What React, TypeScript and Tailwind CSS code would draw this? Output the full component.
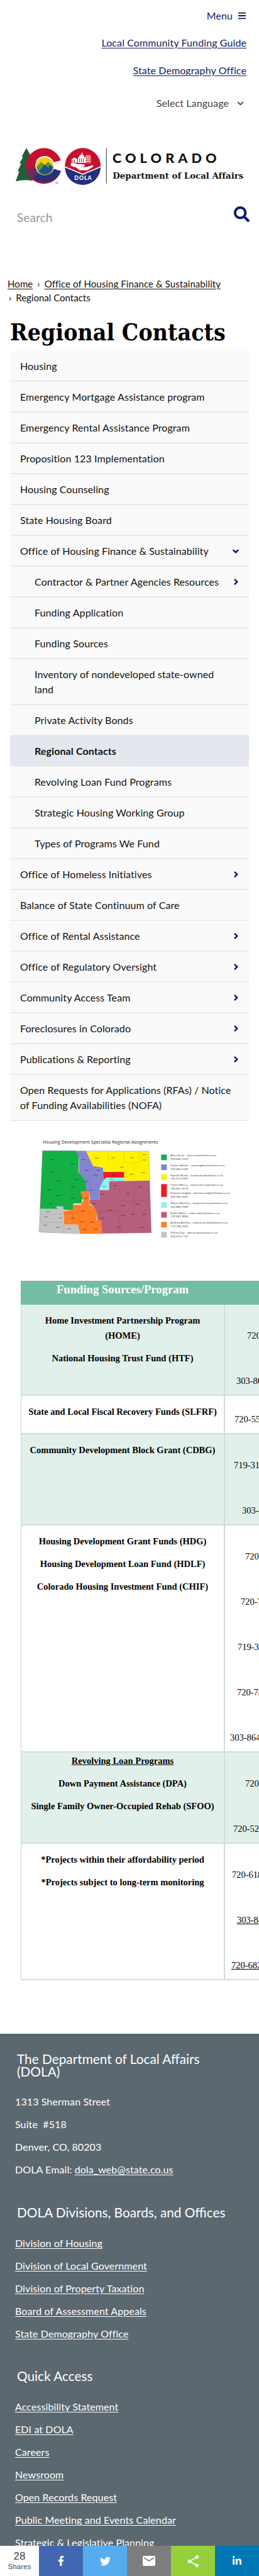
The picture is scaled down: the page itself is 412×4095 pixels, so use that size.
import React from "react";
import { ChevronDown } from "lucide-react";
import { FaBars, FaSearch, FaFacebookF, FaTwitter, FaLinkedinIn } from "react-icons/fa";
import { MdEmail, MdShare } from "react-icons/md";

type NavEntry = { label: string; sub?: boolean; arrow?: "right" | "down"; active?: boolean };

const nav: NavEntry[] = [
  { label: "Housing" },
  { label: "Emergency Mortgage Assistance program" },
  { label: "Emergency Rental Assistance Program" },
  { label: "Proposition 123 Implementation" },
  { label: "Housing Counseling" },
  { label: "State Housing Board" },
  { label: "Office of Housing Finance & Sustainability", arrow: "down" },
  { label: "Contractor & Partner Agencies Resources", sub: true, arrow: "right" },
  { label: "Funding Application", sub: true },
  { label: "Funding Sources", sub: true },
  { label: "Inventory of nondeveloped state-owned land", sub: true },
  { label: "Private Activity Bonds", sub: true },
  { label: "Regional Contacts", sub: true, active: true },
  { label: "Revolving Loan Fund Programs", sub: true },
  { label: "Strategic Housing Working Group", sub: true },
  { label: "Types of Programs We Fund", sub: true },
  { label: "Office of Homeless Initiatives", arrow: "right" },
  { label: "Balance of State Continuum of Care" },
  { label: "Office of Rental Assistance", arrow: "right" },
  { label: "Office of Regulatory Oversight", arrow: "right" },
  { label: "Community Access Team", arrow: "right" },
  { label: "Foreclosures in Colorado", arrow: "right" },
  { label: "Publications & Reporting", arrow: "right" },
  { label: "Open Requests for Applications (RFAs) / Notice of Funding Availabilities (NOFA)" },
];

function Arrow({ dir }: { dir: "right" | "down" }) {
  return (
    <svg
      viewBox="0 0 12 12"
      className={dir === "down" ? "mt-[6px] h-3 w-3 shrink-0 rotate-90" : "mt-[6px] h-3 w-3 shrink-0"}
      fill="none"
      stroke="#0b0b66"
      strokeWidth="2.4"
    >
      <path d="M4 1.8 L8.2 6 L4 10.2" />
    </svg>
  );
}

function NavRow({ entry }: { entry: NavEntry }) {
  return (
    <li
      className={`flex justify-between border-b-2 border-[#ebebeb] pt-3 pr-[15px] pb-[11px] ${entry.sub ? "pl-[39px]" : "pl-4"} ${
        entry.active ? "bg-[#e5e7ef] font-bold" : "bg-[#fafafa]"
      }`}
    >
      <span className={entry.sub ? "max-w-[310px]" : "max-w-[345px]"}>{entry.label}</span>
      {entry.arrow && <Arrow dir={entry.arrow} />}
    </li>
  );
}

function Logo() {
  return (
    <svg viewBox="0 690 1236 201" className="block h-[67px] w-[412px]">
      <path
        d="M126 706 L103 748 L110 748 L93 780 L101 780 L84 818 L92 817 L75 865 Q115 855 152 862 L175 850 L175 770 L150 748 Z"
        fill="#245d38"
      />
      <path d="M290 765 A85 85 0 1 0 290 818 L256 806 A46 46 0 1 1 256 774 Z" fill="#c8102e" />
      <path d="M131 802 L145 838 A85 85 0 0 0 291 815 L256 805 A46 46 0 0 1 180 822 L162 802 Z" fill="#2b2f75" />
      <path d="M133 806 L155 795 L182 828 L152 852 A85 85 0 0 1 133 806 Z" fill="#6a2c63" />
      <circle cx="214" cy="790" r="45" fill="#fff" />
      <circle cx="214" cy="790" r="40" fill="#ffcd00" />
      <path d="M174 795 L197 772 L214 788 L230 770 L254 795 A40 40 0 0 1 174 795 Z" fill="#5d9732" />
      <path d="M186 818 L213 784 L230 800 L240 786 L253 800 A40 40 0 0 1 186 818 Z" fill="#1d4f91" />
      <text x="262" y="875" fontSize="11" fontFamily="Liberation Sans" fill="#333">TM</text>
      <circle cx="395" cy="791" r="85" fill="#c8102e" />
      <path d="M310 797 L395 832 L480 797 A85 85 0 0 1 310 797 Z" fill="#232f7c" />
      <path d="M310 796 L395 831 L480 796" fill="none" stroke="#fff" strokeWidth="5" />
      <path
        d="M336 779 Q352 776 366 782 L402 784 Q410 790 400 794 L378 795 L410 797 L440 788 Q449 789 445 794 L418 812 L380 812 L362 798 L340 792 Z"
        fill="#fff"
      />
      <path d="M342 776 V760 Q356 744 369 760 V776 Z" fill="#fff" />
      <path d="M372 777 V751 H376 Q379 739 389 737 V728 H394 V737 Q402 740 404 751 H408 V777 Z" fill="#fff" />
      <path d="M380 755 V774 M389 755 V774 M398 755 V774 M348 764 V775 M356 762 V775" stroke="#c8102e" strokeWidth="3" />
      <path d="M410 742 H431 V779 M410 742 V779 M417 742 V779 M424 742 V779 M410 751 H431 M410 760 H431 M410 769 H431" fill="none" stroke="#fff" strokeWidth="2.5" />
      <text x="355" y="858" fontSize="26" fontWeight="900" fontFamily="Lato" fill="#fff" textLength="82">DOLA</text>
      <path d="M508 706 V875" stroke="#333" strokeWidth="3" />
      <text x="537" y="778" fontSize="65" fontWeight="900" fontFamily="Lato, sans-serif" fill="#111" textLength="497">COLORADO</text>
      <text x="538" y="851" fontSize="41" fontWeight="700" fontFamily="'DejaVu Serif Condensed','DejaVu Serif', serif" fill="#111" textLength="624" lengthAdjust="spacingAndGlyphs">
        Department of Local Affairs
      </text>
    </svg>
  );
}

const legend: [string, string, string, number, number][] = [
  ["#14b045", "Alicia Scott – alicia.scott@state.co.us", "970-640-7070", 175, 1032],
  ["#8585cf", "Pamm Gibson – pamm.gibson@state.co.us", "720-682-5245", 222, 1072],
  ["#fff200", "Natalie Wowk – natalie.wowk@state.co.us", "720-610-5937", 269, 1064],
  ["", "Teresa McCoy – teresa.mccoy@state.co.us", "720-661-9719", 316, 1064],
  ["", "Demetra English – demetra.english@state.co.us", "303-902-2602", 355, 1096],
  ["#8cf5f0", "Wayne McClary – wayne.mcclary@state.co.us", "303-866-7069", 402, 1086],
  ["#b55f7c", "Robin Miller – robin.miller@state.co.us", "720-682-9694", 449, 1048],
  ["#ff7f27", "Andrew Atchley – andrew.atchley@state.co.us", "719-298-2059", 496, 1086],
  ["#c4c4c4", "Denny Day – denny.day@state.co.us", "303-619-1137", 544, 1038],
];

const counties: [number, number][] = [
  [250, 191], [347, 210], [250, 250], [280, 291], [347, 321], [366, 286], [234, 335], [277, 362], [347, 375], [241, 400],
  [229, 438], [219, 464], [216, 503], [277, 513], [330, 520], [290, 468], [395, 436], [347, 470], [392, 487], [437, 488],
  [404, 523], [457, 522], [400, 191], [413, 242], [470, 242], [457, 264], [415, 294], [435, 336], [462, 183], [540, 182],
  [630, 181], [688, 166], [688, 192], [582, 226], [627, 260], [683, 253], [543, 264], [533, 285], [498, 318], [550, 314],
  [671, 320], [612, 352], [587, 410], [657, 402], [526, 431], [587, 457], [635, 450], [688, 451], [568, 513], [677, 513],
  [453, 400], [490, 470], [486, 355], [409, 375],
];

function RegionMap() {
  return (
    <svg viewBox="0 6 1236 720" className="block h-[240px] w-[412px]" fontFamily="'Open Sans', sans-serif">
      <text x="205" y="114" fontSize="21" fill="#222" textLength="549">Housing Development Specialist Regional Assignments</text>
      <path d="M203 148 H362 L377 175 L374 250 L400 275 L411 300 V343 H383 L400 355 L388 400 H350 L348 430 H303 L298 415 H264 L280 425 H191 Z" fill="#14b045" />
      <path d="M362 149 H411 L445 220 L492 228 L496 285 L475 335 V380 H430 L425 345 H411 V300 L400 275 L376 253 L378 180 Z" fill="#8585cf" />
      <path d="M411 150 H710 L714 290 H592 V249 H492 V224 L445 222 Z" fill="#fff200" />
      <path d="M492 249 H592 V276 H507 L497 288 Z" fill="#ed1c24" />
      <path d="M507 276 H592 V293 H521 V334 H473 L487 300 Z" fill="#8cf5f0" />
      <path d="M521 293 L714 290 L722 539 L487 542 L481 482 L464 480 V450 L448 415 L428 400 V380 H475 V335 H521 Z" fill="#b55f7c" />
      <path d="M383 343 H425 L428 405 L448 415 L464 450 L460 480 H481 L487 543 H383 L370 500 H306 L303 435 L348 428 V405 H385 L398 385 Z" fill="#ff7f27" />
      <path d="M191 425 H280 L264 413 H302 L306 500 H370 L383 543 L187 536 Z" fill="#c4c4c4" />
      <path
        d="M592 152 V205 H665 V152 M665 180 H711 M516 152 V222 M640 205 V289 M567 295 V365 M640 292 V480 M480 435 H570 V540 M570 385 H720 M191 450 H300 M191 490 H300 M300 500 V535 M347 440 V500 M411 480 V540"
        stroke="#00000022"
        strokeWidth="2"
        fill="none"
      />
      <path d="M203 148 L710 150 L722 539 L380 544 L187 536 Z" fill="none" stroke="#777" strokeOpacity="0.6" strokeWidth="2" />
      {counties.map(([x, y]) => (
        <path key={`${x}-${y}`} d={`M${x - 9} ${y} h18`} stroke="#000" strokeOpacity="0.45" strokeWidth="3" />
      ))}
      <rect x="769" y="307" width="27" height="61" fill="#ed1c24" />
      {legend.map(([color, name, phone, y, right]) => (
        <g key={phone}>
          {color && <rect x="769" y={y - 9} width="27" height="27" fill={color} />}
          <text x="814" y={y} fontSize="13" fill="#222" textLength={right - 814}>{name}</text>
          <text x="814" y={y + 17} fontSize="13" fill="#222" textLength="84">{phone}</text>
        </g>
      ))}
    </svg>
  );
}

type FundRow = {
  height: string;
  shaded?: boolean;
  firstPad: string;
  secondPad: string;
  programs: string[];
  phones: { text: string; left: string; link?: boolean }[];
};

const rows: FundRow[] = [
  {
    height: "h-[145px]", shaded: true, firstPad: "pt-[13px]", secondPad: "pt-[37px]",
    programs: ["Home Investment Partnership Program (HOME)", "National Housing Trust Fund (HTF)"],
    phones: [{ text: "720-682-5245", left: "pl-[35px]" }, { text: "303-864-7810", left: "pl-[18px]" }],
  },
  {
    height: "h-[61px]", firstPad: "pt-[13px]", secondPad: "pt-[25px]",
    programs: ["State and Local Fiscal Recovery Funds (SLFRF)"],
    phones: [{ text: "720-557-1264", left: "pl-[15px]" }],
  },
  {
    height: "h-[145px]", shaded: true, firstPad: "pt-[13px]", secondPad: "pt-[37px]",
    programs: ["Community Development Block Grant (CDBG)"],
    phones: [{ text: "719-315-2059", left: "pl-[14px]" }, { text: "303-619-1137", left: "pl-[27px]" }],
  },
  {
    height: "h-[361px]", firstPad: "pt-[13px]", secondPad: "pt-[37px]",
    programs: ["Housing Development Grant Funds (HDG)", "Housing Development Loan Fund (HDLF)", "Colorado Housing Investment Fund (CHIF)"],
    phones: [
      { text: "720-682-9694", left: "pl-[32px]" },
      { text: "720-766-4112", left: "pl-[25px]" },
      { text: "719-334-2059", left: "pl-[20px]" },
      { text: "720-786-3313", left: "pl-[19px]" },
      { text: "303-864-7831", left: "pl-[8px]" },
    ],
  },
  {
    height: "h-[145px]", shaded: true, firstPad: "pt-[1px]", secondPad: "pt-[37px]",
    programs: ["Revolving Loan Programs", "Down Payment Assistance (DPA)", "Single Family Owner-Occupied Rehab (SFOO)"],
    phones: [{ text: "720-661-9719", left: "pl-[32px]" }, { text: "720-527-4480", left: "pl-[13px]" }],
  },
  {
    height: "h-[217px]", firstPad: "pt-[13px]", secondPad: "pt-[37px]",
    programs: ["*Projects within their affordability period", "*Projects subject to long-term monitoring"],
    phones: [
      { text: "720-618-5210", left: "pl-[11px]" },
      { text: "303-842-1190", left: "pl-[19px]", link: true },
      { text: "720-682-4416", left: "pl-[10px]", link: true },
    ],
  },
];

function FundingTable() {
  return (
    <div className="ml-[33px] w-[379px] overflow-hidden font-['Liberation_Serif',serif] tracking-normal text-black">
      <div className="flex h-[38px] w-[760px] border-t border-[#93aaa3] bg-[#73bda6]">
        <div className="w-[324px] pt-px text-center text-[18.67px] leading-6 font-bold text-white">Funding Sources/Program</div>
      </div>
      {rows.map((row) => (
        <div
          key={row.programs[0]}
          className={`flex w-[760px] border-b-2 border-l border-l-[#c4d3cf] border-b-[#cfdedb] ${row.height} ${row.shaded ? "bg-[#e2f0eb]" : "bg-white"}`}
        >
          <div className={`flex w-[324px] shrink-0 flex-col items-center gap-3 border-r-2 border-[#d0dbd8] text-center text-[14.5px] leading-6 font-bold ${row.firstPad}`}>
            {row.programs.map((p) => (
              <p
                key={p}
                className={
                  p === "Revolving Loan Programs"
                    ? "underline"
                    : p.endsWith("(HOME)")
                      ? "w-[270px]"
                      : "whitespace-nowrap"
                }
              >
                {p}
              </p>
            ))}
          </div>
          <div className={`flex flex-col gap-12 text-[14.5px] leading-6 ${row.secondPad}`}>
            {row.phones.map((ph) => (
              <p key={ph.text} className={`whitespace-nowrap ${ph.left}`}>
                <span className={ph.link ? "underline" : ""}>{ph.text}</span>
              </p>
            ))}
          </div>
        </div>
      ))}
    </div>
  );
}

function FooterLink({ children }: { children: React.ReactNode }) {
  return (
    <p>
      <a className="underline underline-offset-2">{children}</a>
    </p>
  );
}

function FooterHeading({ children }: { children: React.ReactNode }) {
  return <h2 className="max-w-[350px] pl-[3px] text-[20.8px] leading-5 tracking-normal">{children}</h2>;
}

export default function App() {
  return (
    <div className="relative flex h-[4095px] w-[412px] flex-col overflow-hidden bg-white font-['Lato',sans-serif] text-[16px] leading-6 tracking-[0.1px] text-[#111]">
      <header className="flex h-[230px] flex-col items-end pt-[13px] pr-5 text-[#0f1c5f]">
        <div className="flex items-center gap-2">
          <span>Menu</span>
          <FaBars className="h-[14px] w-[14px]" />
        </div>
        <a className="mt-[19px] underline underline-offset-2">Local Community Funding Guide</a>
        <a className="mt-[20px] underline underline-offset-2">State Demography Office</a>
        <div className="mt-[28px] flex items-center gap-[11px] pr-[2px] text-[#444]">
          <span>Select Language</span>
          <ChevronDown className="h-[15px] w-[15px]" strokeWidth={3} />
        </div>
      </header>

      <Logo />

      <div className="flex h-[143px] items-start justify-between pt-[31px] pr-[15px] pl-[27px]">
        <span className="mt-[6px] text-[19px] text-[#999]">Search</span>
        <FaSearch className="h-[25px] w-[25px] text-[#061a70]" />
      </div>

      <nav className="flex h-[46px] flex-col pl-3 text-[15px] leading-[22px] tracking-[0.08px]">
        <p>
          <a className="underline underline-offset-2">Home</a>
          <span className="mx-[7px]">›</span>
          <a className="underline underline-offset-2">Office of Housing Finance &amp; Sustainability</a>
        </p>
        <p className="tracking-normal">
          <span className="mr-[7px] ml-[2px]">›</span>Regional Contacts
        </p>
      </nav>

      <h1 className="mt-[17px] h-[55px] pl-4 font-['DejaVu_Serif_Condensed','DejaVu_Serif',serif] text-[37px] leading-[50px] font-bold tracking-[0.1px] whitespace-nowrap text-black">
        Regional Contacts
      </h1>

      <ul className="mr-4 ml-4">
        {nav.map((entry) => (
          <NavRow key={entry.label} entry={entry} />
        ))}
      </ul>

      <RegionMap />
      <div className="h-[14px] shrink-0" />
      <FundingTable />

      <footer className="mt-[85px] flex grow flex-col border-t-4 border-[#56656d] bg-[#5c6870] px-6 text-white">
        <div className="mt-[26px]">
          <FooterHeading>The Department of Local Affairs (DOLA)</FooterHeading>
        </div>
        <div className="mt-[26px] flex flex-col gap-3">
          <p>1313 Sherman Street</p>
          <p className="whitespace-pre">{"Suite  #518"}</p>
          <p>Denver, CO, 80203</p>
          <p>
            DOLA Email: <a className="underline underline-offset-2">dola_web@state.co.us</a>
          </p>
        </div>
        <div className="mt-[46px]">
          <FooterHeading>DOLA Divisions, Boards, and Offices</FooterHeading>
        </div>
        <div className="mt-[27px] flex flex-col gap-3">
          <FooterLink>Division of Housing</FooterLink>
          <FooterLink>Division of Local Government</FooterLink>
          <FooterLink>Division of Property Taxation</FooterLink>
          <FooterLink>Board of Assessment Appeals</FooterLink>
          <FooterLink>State Demography Office</FooterLink>
        </div>
        <div className="mt-[45px]">
          <FooterHeading>Quick Access</FooterHeading>
        </div>
        <div className="mt-[27px] flex flex-col gap-3">
          <FooterLink>Accessibility Statement</FooterLink>
          <FooterLink>EDI at DOLA</FooterLink>
          <FooterLink>Careers</FooterLink>
          <FooterLink>Newsroom</FooterLink>
          <FooterLink>Open Records Request</FooterLink>
          <FooterLink>Public Meeting and Events Calendar</FooterLink>
          <FooterLink>Strategic &amp; Legislative Planning</FooterLink>
        </div>
      </footer>

      <div className="absolute bottom-0 left-0 flex h-12 w-full text-white">
        <div className="flex w-[62px] flex-col items-center bg-white pt-2 font-['Liberation_Sans',sans-serif] text-[#444]">
          <span className="text-[17px] leading-[18px]">28</span>
          <span className="text-[11.5px] leading-[14px]">Shares</span>
        </div>
        <div className="flex w-[70px] items-center justify-center bg-[#4267b2]">
          <FaFacebookF className="h-4 w-4" />
        </div>
        <div className="flex w-[70px] items-center justify-center bg-[#55acee]">
          <FaTwitter className="h-[17px] w-[17px]" />
        </div>
        <div className="flex w-[70px] items-center justify-center bg-[#7d7d7d]">
          <MdEmail className="h-6 w-6" />
        </div>
        <div className="flex w-[70px] items-center justify-center bg-[#95d03a]">
          <MdShare className="h-[23px] w-[23px]" />
        </div>
        <div className="flex w-[70px] items-center justify-center bg-[#0077b5]">
          <FaLinkedinIn className="h-4 w-4" />
        </div>
      </div>
    </div>
  );
}
